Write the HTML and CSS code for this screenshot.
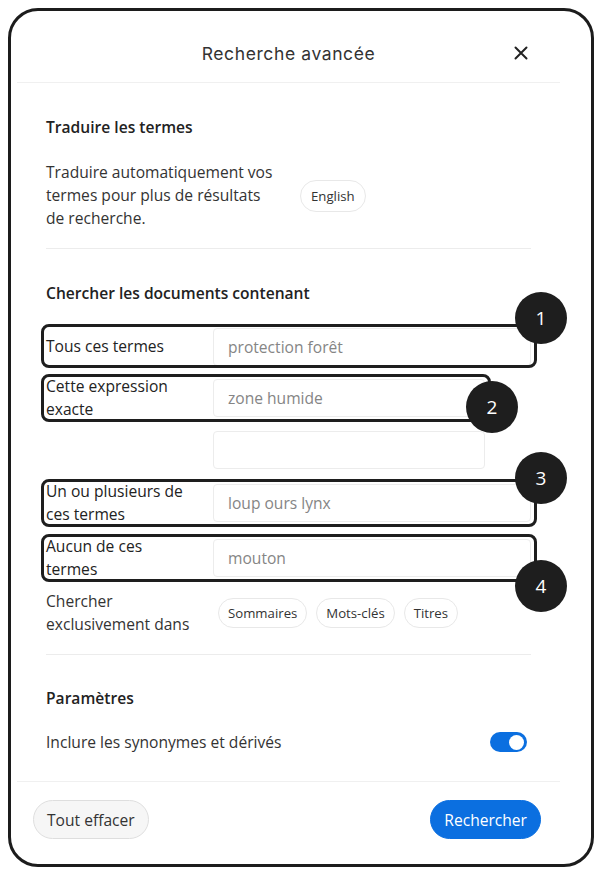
FILE: index.html
```html
<!DOCTYPE html>
<html lang="fr">
<head>
    <meta charset="UTF-8">
    <meta name="viewport" content="width=device-width, initial-scale=1.0">
    <title>Recherche avancée</title>
    <link rel="stylesheet" href="styles.css">
</head>
<body>
    <div class="frame">
        <div class="dialog">
            <header class="dialog-header">
                <h1>Recherche avancée</h1>
                <button class="close" aria-label="Fermer">
                    <svg width="14" height="14" viewBox="0 0 14 14"><path d="M1.5 1.5 L12.5 12.5 M12.5 1.5 L1.5 12.5" stroke="#222" stroke-width="2" stroke-linecap="round"/></svg>
                </button>
            </header>

            <div class="dialog-body">
                <section class="section">
                    <h2>Traduire les termes</h2>
                    <div class="translate">
                        <p>Traduire automatiquement vos termes pour plus de résultats de recherche.</p>
                        <button class="pill pill-lang">English</button>
                    </div>
                </section>

                <section class="section">
                    <h2>Chercher les documents contenant</h2>
                    <div class="fields">
                        <div class="field-row">
                            <label>Tous ces termes</label>
                            <input type="text" placeholder="protection forêt">
                            <span class="mark mark-single"></span>
                            <span class="badge badge-1">1</span>
                        </div>
                        <div class="field-row field-narrow">
                            <label>Cette expression exacte</label>
                            <input type="text" placeholder="zone humide">
                            <span class="mark"></span>
                            <span class="badge badge-2">2</span>
                        </div>
                        <div class="field-row field-narrow field-extra">
                            <input type="text">
                        </div>
                        <div class="field-row">
                            <label>Un ou plusieurs de ces termes</label>
                            <input type="text" placeholder="loup ours lynx">
                            <span class="mark"></span>
                            <span class="badge badge-3">3</span>
                        </div>
                        <div class="field-row">
                            <label>Aucun de ces termes</label>
                            <input type="text" placeholder="mouton">
                            <span class="mark"></span>
                            <span class="badge badge-4">4</span>
                        </div>
                        <div class="field-row">
                            <label class="label-soft">Chercher exclusivement dans</label>
                            <div class="pills">
                                <button class="pill">Sommaires</button>
                                <button class="pill">Mots-clés</button>
                                <button class="pill">Titres</button>
                            </div>
                        </div>
                    </div>
                </section>

                <section class="section section-last">
                    <h2>Paramètres</h2>
                    <div class="setting">
                        <span>Inclure les synonymes et dérivés</span>
                        <span class="toggle"><span class="knob"></span></span>
                    </div>
                </section>
            </div>

            <footer class="dialog-footer">
                <button class="btn btn-light">Tout effacer</button>
                <button class="btn btn-primary">Rechercher</button>
            </footer>
        </div>
    </div>
</body>
</html>
```

FILE: styles.css
```css
* {
    box-sizing: border-box;
}
body {
    margin: 0;
    background-color: #fff;
    font-family: "Open Sans", "Noto Sans", sans-serif;
    color: #2b2b2b;
}
.frame {
    margin: 8px;
    height: 859px;
    border: 3px solid #1c1c1c;
    border-radius: 30px;
    padding: 0 31px 0 6px;
    overflow: hidden;
}
.dialog {
    display: flex;
    flex-direction: column;
    height: 100%;
}
.dialog-header {
    position: relative;
    flex-shrink: 0;
    display: flex;
    align-items: center;
    justify-content: center;
    height: 72px;
    padding-top: 13px;
    border-bottom: 1px solid #f0f0f0;
}
.dialog-header h1 {
    margin: 0;
    font-family: "Inter", sans-serif;
    font-weight: 400;
    font-size: 17.5px;
    letter-spacing: 0.6px;
    color: #333;
}
.close {
    position: absolute;
    right: 32px;
    top: 35px;
    width: 14px;
    height: 14px;
    padding: 0;
    border: none;
    background: none;
    display: flex;
}
.dialog-body {
    flex: 1;
    padding: 0 29px;
}
.section {
    padding: 33px 0 18px;
    border-bottom: 1px solid #ececec;
}
.section-last {
    padding-top: 32px;
    border-bottom: none;
}
.section h2 {
    margin: 0 0 23px;
    font-size: 15.6px;
    font-weight: 600;
    line-height: 22px;
    color: #222;
}
.section-last h2 {
    margin-bottom: 22px;
}
.translate {
    display: flex;
    align-items: center;
}
.translate p {
    margin: 0;
    width: 232px;
    font-size: 15.6px;
    line-height: 23px;
    color: #333;
}
.pill {
    font-family: inherit;
    font-size: 13.2px;
    color: #333;
    background-color: #fff;
    border: 1px solid #e8e8e8;
    border-radius: 16px;
    height: 30px;
    padding: 0 9px;
}
.pill-lang {
    height: 32px;
    padding: 0 10px;
    margin-left: 22px;
}
.fields {
    display: flex;
    flex-direction: column;
    gap: 9px;
}
.field-row {
    position: relative;
    display: flex;
    align-items: center;
    min-height: 39px;
}
.field-narrow {
    margin-right: 46px;
}
.field-extra {
    padding-left: 167px;
    margin-bottom: 2px;
}
.field-row label {
    width: 167px;
    flex-shrink: 0;
    font-size: 15.6px;
    line-height: 23px;
    color: #222;
    padding-right: 16px;
}
.field-row .label-soft {
    color: #333;
}
.field-row input {
    flex: 1;
    height: 38px;
    border: 1px solid #ececec;
    border-radius: 4px;
    padding: 0 14px;
    font-family: inherit;
    font-size: 15.6px;
    color: #333;
    outline: none;
}
.field-row input::placeholder {
    color: #858585;
}
.pills {
    display: flex;
    gap: 9px;
    padding-left: 5px;
}
.mark {
    position: absolute;
    top: -1px;
    bottom: -1px;
    left: -5px;
    right: -6px;
    border: 3px solid #1e1e1e;
    border-radius: 8px;
    pointer-events: none;
}
.mark-single {
    top: -3px;
    bottom: -2px;
}
.badge {
    position: absolute;
    right: -36px;
    width: 52px;
    height: 52px;
    border-radius: 50%;
    background-color: #1e1e1e;
    color: #fff;
    font-size: 19px;
    font-weight: 500;
    display: flex;
    align-items: center;
    justify-content: center;
}
.badge-1 {
    top: -35px;
}
.badge-2 {
    top: 6px;
    right: -33px;
}
.badge-3 {
    top: -28px;
}
.badge-4 {
    top: 25px;
}
.setting {
    display: flex;
    align-items: center;
    justify-content: space-between;
    font-size: 15.6px;
    line-height: 22px;
    color: #333;
}
.toggle {
    width: 37px;
    height: 20px;
    border-radius: 10px;
    background-color: #0b6fe0;
    display: flex;
    align-items: center;
    justify-content: flex-end;
    padding: 0 3px;
    margin-right: 4px;
}
.knob {
    width: 15px;
    height: 15px;
    border-radius: 50%;
    background-color: #fff;
}
.dialog-footer {
    flex-shrink: 0;
    display: flex;
    justify-content: space-between;
    align-items: flex-start;
    border-top: 1px solid #f0f0f0;
    padding: 18px 19px 0 16px;
    height: 83px;
}
.btn {
    height: 39px;
    border-radius: 20px;
    font-family: inherit;
    font-size: 15.6px;
    padding: 0 13px;
    cursor: pointer;
}
.btn-light {
    background-color: #f6f6f6;
    border: 1px solid #dedede;
    color: #333;
}
.btn-primary {
    background-color: #0b6fe0;
    border: 1px solid #0b6fe0;
    color: #fff;
}
```
